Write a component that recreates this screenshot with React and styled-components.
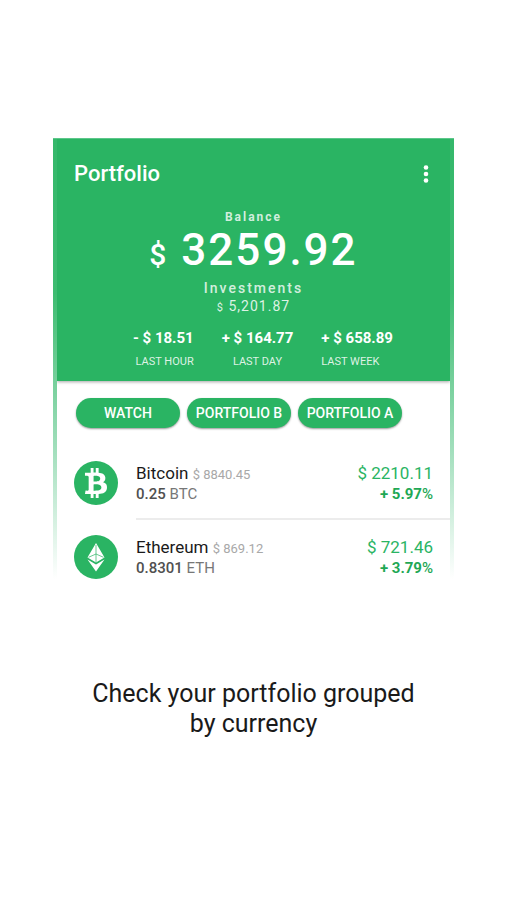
import React from "react";
import styled, { createGlobalStyle } from "styled-components";
import { FaBtc } from "react-icons/fa";

const GREEN = "#2ab463";

const GlobalStyle = createGlobalStyle`
  *, *::before, *::after { box-sizing: border-box; }
  body {
    margin: 0;
    background: #fff;
    color: #1a1a1a;
    font-family: Roboto, "Liberation Sans", sans-serif;
  }
`;

const Page = styled.main`
  display: flex;
  flex-direction: column;
  padding: 138px 52px 40px 53px;
`;

const Frame = styled.section`
  padding: 0 4px;
  border-top: 1px solid #5cc78a;
  background: linear-gradient(to bottom, #35b86b 0, #3dbc71 35%, #a6e0bf 72%, #fff 100%);
`;

const Screen = styled.div`
  overflow: hidden;
  background: #fff;
`;

const Header = styled.header`
  display: flex;
  flex-direction: column;
  background: ${GREEN};
  color: #fff;
  padding-bottom: 11px;
  box-shadow: 0 1px 3px rgba(0, 0, 0, 0.35);
`;

const Toolbar = styled.div`
  display: flex;
  align-items: center;
  justify-content: space-between;
  height: 69px;
  padding: 0 12px 0 17px;
`;

const Title = styled.h1`
  margin: 0;
  font-size: 22px;
  line-height: 28px;
  font-weight: 500;
`;

const MenuButton = styled.button`
  display: flex;
  align-items: center;
  justify-content: center;
  width: 24px;
  height: 32px;
  padding: 0;
  border: 0;
  background: none;
  color: inherit;
  cursor: pointer;
`;

const Summary = styled.div`
  display: flex;
  flex-direction: column;
  align-items: center;
`;

const Label = styled.span`
  font-size: ${(p) => (p.$large ? 14 : 12)}px;
  line-height: 18px;
  letter-spacing: 2px;
  font-weight: ${(p) => (p.$large ? 500 : 700)};
  color: rgba(255, 255, 255, 0.8);
`;

const Balance = styled.strong`
  font-size: 44px;
  line-height: 48px;
  font-weight: 500;
  letter-spacing: 2px;
  white-space: nowrap;
`;

const BalanceSign = styled.span`
  font-size: 30px;
`;

const Invested = styled.span`
  font-size: 14px;
  line-height: 18px;
  letter-spacing: 1px;
  color: rgba(255, 255, 255, 0.85);
`;

const InvestedSign = styled.span`
  font-size: 11px;
`;

const Stats = styled.dl`
  display: grid;
  grid-template-columns: 1fr auto 1fr;
  column-gap: 28px;
  margin: 11px 0 0;
  padding-left: 8px;
`;

const Stat = styled.div`
  display: flex;
  flex-direction: column-reverse;
  justify-self: ${(p) => p.$align};
  text-align: ${(p) => p.$align};
`;

const StatLabel = styled.dt`
  font-size: 11px;
  line-height: 16px;
  margin-top: 6px;
  color: rgba(255, 255, 255, 0.85);
`;

const StatValue = styled.dd`
  margin: 0;
  font-size: 15px;
  line-height: 20px;
  font-weight: 700;
`;

const Chips = styled.nav`
  display: flex;
  gap: 7px;
  padding: 17px 19px 18px;
`;

const Chip = styled.button`
  width: 104px;
  height: 30px;
  padding: 0;
  border: 0;
  border-radius: 15px;
  background: ${GREEN};
  color: #fff;
  font: 500 14px/30px Roboto, "Liberation Sans", sans-serif;
  white-space: nowrap;
  box-shadow: 0 1px 2px rgba(0, 0, 0, 0.4);
  cursor: pointer;
`;

const List = styled.ul`
  margin: 0;
  padding: 0;
  list-style: none;
`;

const Row = styled.li`
  display: flex;
  gap: 18px;
  padding-left: 17px;

  &:not(:last-child) > div {
    padding-bottom: 14px;
    border-bottom: 2px solid #ececec;
  }
`;

const CoinBadge = styled.span`
  display: flex;
  flex: none;
  align-items: center;
  justify-content: center;
  width: 44px;
  height: 44px;
  margin-top: 15px;
  border-radius: 50%;
  background: ${GREEN};
  color: #fff;
`;

const RowBody = styled.div`
  display: flex;
  flex: 1;
  justify-content: space-between;
  padding: 16px 17px 0 0;
`;

const Column = styled.div`
  display: flex;
  flex-direction: column;
  align-items: ${(p) => (p.$end ? "flex-end" : "flex-start")};
`;

const Name = styled.span`
  font-size: 17px;
  line-height: 22px;
`;

const Price = styled.span`
  font-size: 13px;
  line-height: 1;
  color: #a8a8a8;
`;

const Amount = styled.span`
  font-size: 15px;
  line-height: 20px;
  color: #777;
`;

const Quantity = styled.span`
  font-weight: 500;
  line-height: 1;
  color: #505050;
`;

const Value = styled.span`
  font-size: 17px;
  line-height: 22px;
  color: ${GREEN};
`;

const Change = styled.span`
  font-size: 15px;
  line-height: 20px;
  font-weight: 700;
  color: #1fa855;
`;

const Percent = styled.span`
  font-weight: 500;
  line-height: 1;
`;

const Caption = styled.p`
  max-width: 340px;
  margin: 100px auto 0;
  font-size: 25px;
  line-height: 30px;
  text-align: center;
`;

const MoreIcon = () => (
  <svg width="6" height="18" viewBox="0 0 6 18" fill="currentColor" aria-hidden="true">
    <circle cx="3" cy="2.5" r="2.3" />
    <circle cx="3" cy="9" r="2.3" />
    <circle cx="3" cy="15.5" r="2.3" />
  </svg>
);

const EthereumIcon = () => (
  <svg width="18" height="29" viewBox="0 0 18 29" aria-hidden="true">
    <path fill="#fff" d="M9 0 17.5 14.5 9 19.5.5 14.5ZM.5 16.5 9 21.5l8.500-5L9 28.500Z" />
    <path
      fill="none"
      stroke={GREEN}
      strokeWidth="0.7"
      d="M9 2v17M1.500 14.300 9 11l7.500 3.300"
    />
  </svg>
);

const stats = [
  { label: "LAST HOUR", value: "- $ 18.51", align: "end" },
  { label: "LAST DAY", value: "+ $ 164.77", align: "center" },
  { label: "LAST WEEK", value: "+ $ 658.89", align: "start" },
];

const coins = [
  {
    name: "Bitcoin", price: "$ 8840.45", quantity: "0.25", unit: "BTC",
    value: "$ 2210.11", change: "+ 5.97", icon: <FaBtc size={30} aria-hidden="true" />,
  },
  {
    name: "Ethereum", price: "$ 869.12", quantity: "0.8301", unit: "ETH",
    value: "$ 721.46", change: "+ 3.79", icon: <EthereumIcon />,
  },
];

export default function App() {
  return (
    <>
      <GlobalStyle />
      <Page>
        <Frame>
          <Screen>
            <Header>
              <Toolbar>
                <Title>Portfolio</Title>
                <MenuButton type="button" aria-label="More options">
                  <MoreIcon />
                </MenuButton>
              </Toolbar>
              <Summary>
                <Label>Balance</Label>
                <Balance>
                  <BalanceSign>$</BalanceSign> 3259.92
                </Balance>
                <Label $large>Investments</Label>
                <Invested>
                  <InvestedSign>$</InvestedSign> 5,201.87
                </Invested>
              </Summary>
              <Stats>
                {stats.map((s) => (
                  <Stat key={s.label} $align={s.align}>
                    <StatLabel>{s.label}</StatLabel>
                    <StatValue>{s.value}</StatValue>
                  </Stat>
                ))}
              </Stats>
            </Header>
            <Chips aria-label="Portfolios">
              <Chip type="button">WATCH</Chip>
              <Chip type="button">PORTFOLIO B</Chip>
              <Chip type="button">PORTFOLIO A</Chip>
            </Chips>
            <List>
              {coins.map((c) => (
                <Row key={c.name}>
                  <CoinBadge>{c.icon}</CoinBadge>
                  <RowBody>
                    <Column>
                      <Name>
                        {c.name} <Price>{c.price}</Price>
                      </Name>
                      <Amount>
                        <Quantity>{c.quantity}</Quantity> {c.unit}
                      </Amount>
                    </Column>
                    <Column $end>
                      <Value>{c.value}</Value>
                      <Change>
                        {c.change}
                        <Percent>%</Percent>
                      </Change>
                    </Column>
                  </RowBody>
                </Row>
              ))}
            </List>
          </Screen>
        </Frame>
        <Caption>Check your portfolio grouped by currency</Caption>
      </Page>
    </>
  );
}
